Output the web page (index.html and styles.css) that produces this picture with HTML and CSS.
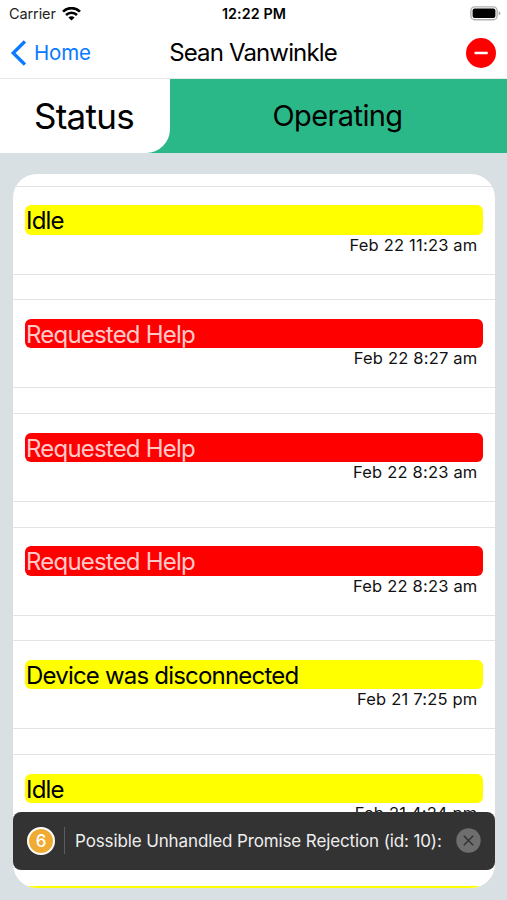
FILE: index.html
```html
<!DOCTYPE html>
<html lang="en">
<head>
    <meta charset="utf-8">
    <title>Sean Vanwinkle</title>
    <link rel="stylesheet" href="styles.css">
</head>
<body>
    <div class="statusbar">
        <div class="carrier">
            <span>Carrier</span>
            <svg width="19" height="14" viewBox="0 0 19 14">
                <path d="M1 4.6 A12.2 12.2 0 0 1 18 4.6" fill="none" stroke="#000" stroke-width="2.7"/>
                <path d="M4 8 A8 8 0 0 1 15 8" fill="none" stroke="#000" stroke-width="2.5"/>
                <path d="M9.5 13.6 L6.4 10.5 A4.4 4.4 0 0 1 12.6 10.5 Z"/>
            </svg>
        </div>
        <span class="clock">12:22 PM</span>
        <svg class="battery" width="31" height="15" viewBox="0 0 31 15">
            <rect x="0.9" y="0.9" width="26.2" height="12.8" rx="3.8" fill="#fff" stroke="#b0b0b0" stroke-width="1.4"/>
            <rect x="2.6" y="2.6" width="22.8" height="9.4" rx="2"/>
            <path d="M28.6 5 Q30.4 5.8 30.4 7.3 Q30.4 8.8 28.6 9.6 Z" fill="#aaa"/>
        </svg>
    </div>

    <div class="navbar">
        <div class="back">
            <svg width="16" height="26" viewBox="0 0 16 26">
                <path d="M14.9 1.4 L3.2 13 L14.9 24.6" fill="none" stroke="#0a7aff" stroke-width="3.3"/>
            </svg>
            <span>Home</span>
        </div>
        <span class="title">Sean Vanwinkle</span>
        <svg class="remove" width="30" height="30" viewBox="0 0 30 30">
            <circle cx="15" cy="15" r="15" fill="#f00"/>
            <rect x="8.5" y="13.8" width="13.3" height="2.4" rx="0.6" fill="#fff"/>
        </svg>
    </div>

    <div class="state">
        <div class="state-label"><span>Status</span></div>
        <div class="state-value"><span>Operating</span></div>
    </div>

    <div class="card">
        <div class="item">
            <div class="event yellow"><span>Idle</span></div>
            <div class="date">Feb 22 11:23 am</div>
        </div>
        <div class="item">
            <div class="event red"><span>Requested Help</span></div>
            <div class="date">Feb 22 8:27 am</div>
        </div>
        <div class="item">
            <div class="event red"><span>Requested Help</span></div>
            <div class="date">Feb 22 8:23 am</div>
        </div>
        <div class="item">
            <div class="event red"><span>Requested Help</span></div>
            <div class="date">Feb 22 8:23 am</div>
        </div>
        <div class="item">
            <div class="event yellow"><span>Device was disconnected</span></div>
            <div class="date">Feb 21 7:25 pm</div>
        </div>
        <div class="item">
            <div class="event yellow"><span>Idle</span></div>
            <div class="date">Feb 21 4:24 pm</div>
        </div>
        <div class="item">
            <div class="event yellow"></div>
        </div>
    </div>

    <div class="toast">
        <div class="count">6</div>
        <div class="message"><span>Possible Unhandled Promise Rejection (id: 10):</span></div>
        <svg class="close" width="25" height="25" viewBox="0 0 25 25">
            <circle cx="12.5" cy="12.5" r="12.2" fill="#6e6e6e"/>
            <path d="M7.8 7.8 L17.2 17.2 M17.2 7.8 L7.8 17.2" stroke="#333" stroke-width="1.5"/>
        </svg>
    </div>
</body>
</html>
```
FILE: styles.css
```css
* { box-sizing: border-box; }
body { margin: 0; height: 900px; overflow: hidden; background: #d8e0e3; color: #000; font-family: Inter, "Liberation Sans", sans-serif; position: relative; }
svg { display: block; flex: none; }
span { white-space: nowrap; }

.statusbar { display: grid; grid-template-columns: 1fr auto 1fr; align-items: center; height: 27px; padding: 0 6px 0 9px; background: #fff; font-size: 14.5px; }
.carrier { display: flex; align-items: center; gap: 6px; color: #222; letter-spacing: -0.1px; }
.clock { font-weight: 600; font-size: 14.3px; letter-spacing: 0.1px; padding-right: 2px; }
.battery { justify-self: end; }

.navbar { display: grid; grid-template-columns: 1fr auto 1fr; align-items: center; height: 52px; padding: 0 11px 0 10px; background: #fff; border-bottom: 1px solid #e8e8e8; }
.back { display: flex; align-items: center; gap: 8px; color: #0a7aff; font-size: 20.5px; letter-spacing: -0.2px; }
.title { font-size: 24px; letter-spacing: -0.85px; }
.remove { justify-self: end; }

.state { display: flex; height: 73.5px; background: #2bb888; }
.state-label { width: 170px; padding-right: 2px; display: flex; align-items: center; justify-content: center; background: #fff; border-bottom-right-radius: 24px; font-size: 35px; letter-spacing: -0.7px; }
.state-value { flex: 1; display: flex; align-items: center; justify-content: center; font-size: 29px; letter-spacing: -0.6px; padding-right: 2px; }

.card { height: 714px; margin: 21px 12.5px 0 13px; padding-top: 12.3px; background: #fff; border-radius: 24px; overflow: hidden; }
.item { height: 89px; margin-bottom: 24.66px; padding: 18.6px 12px 0; border: solid #e0e4e6; border-width: 1px 0; }
.item:last-child { margin-top: -1px; }
.event { height: 29.4px; border-radius: 6px; line-height: 31px; font-size: 24px; padding-left: 1px; letter-spacing: -0.8px; }
.yellow { background: #ff0; }
.red { background: #f00; color: #ffc9c9; }
.date { text-align: right; font-size: 16.5px; line-height: 21px; letter-spacing: 0.2px; padding-right: 5px; color: #111; }

.toast { position: absolute; left: 13px; top: 811.5px; width: 482px; height: 58px; padding: 0 14px; display: flex; align-items: center; background: #333; border-radius: 8px; color: #eee; }
.count { width: 28px; height: 28px; border: 2.4px solid #fff; border-radius: 50%; background: #f0ab32; color: #fff; display: flex; align-items: center; justify-content: center; font-size: 17px; font-weight: 500; }
.message { flex: 1; height: 27px; margin-left: 9px; padding-left: 10px; border-left: 1px solid #5c5c5c; line-height: 29px; font-size: 17px; letter-spacing: -0.12px; }
```
